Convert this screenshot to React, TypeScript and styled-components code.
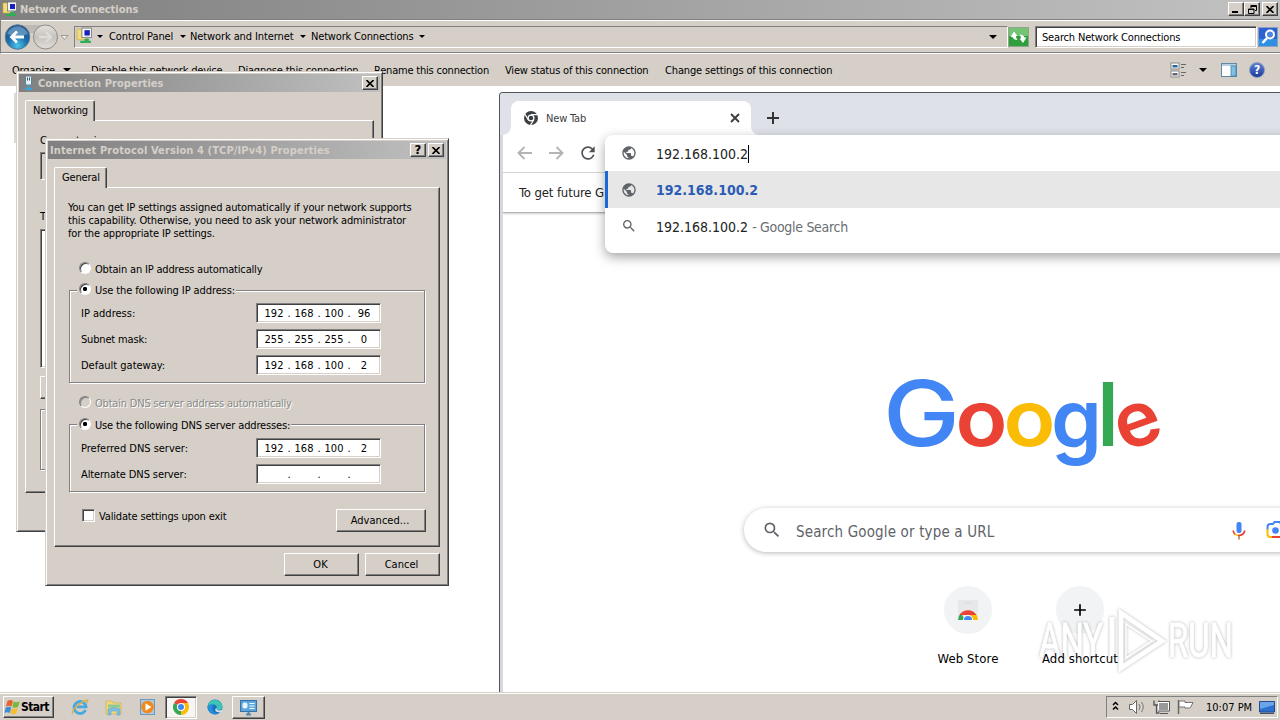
import React from "react";
import styled, { createGlobalStyle, css } from "styled-components";
import { MdAdd, MdPublic, MdRefresh, MdSearch } from "react-icons/md";

const face = "#d5cfc8";
const shade = "#808080";
const dark = "#404040";
const tahoma = `"DejaVu Sans Condensed", "DejaVu Sans", sans-serif`;

const Global = createGlobalStyle`
  * { box-sizing: border-box; }
  body { margin: 0; background: #fff; }
`;

const raised = css`
  border: 1px solid;
  border-color: #fff ${dark} ${dark} #fff;
  box-shadow: inset -1px -1px ${shade};
`;
const sunken = css`
  border: 1px solid;
  border-color: ${shade} #fff #fff ${shade};
  box-shadow: inset 1px 1px ${dark}, inset -1px -1px ${face};
`;

const Desktop = styled.div`
  position: relative;
  width: 1280px;
  height: 720px;
  overflow: hidden;
  display: flex;
  flex-direction: column;
  background: #fff;
  font: 11px/13px ${tahoma};
  letter-spacing: -0.17px;
  color: #000;
  white-space: nowrap;
`;

/* ---------- Explorer window ---------- */
const Explorer = styled.div`
  flex: 1;
  display: flex;
  flex-direction: column;
`;
const ExplorerTitle = styled.div`
  height: 19px;
  display: flex;
  align-items: center;
  padding: 0 2px 1px 2px;
  gap: 2px;
  background: linear-gradient(90deg, #808080, #c2c2c2);
  color: ${face};
  font-weight: bold;
  letter-spacing: -0.05px;
`;
const Spacer = styled.div`
  flex: 1;
`;
const CaptionButton = styled.div<{ $gap?: number }>`
  ${raised}
  width: 16px;
  height: 14px;
  margin-left: ${(p) => p.$gap ?? 0}px;
  background: ${face};
  display: flex;
  align-items: center;
  justify-content: center;
  color: #000;
`;
const HelpMark = styled.span`
  font-size: 13px;
  line-height: 12px;
`;
const NavBar = styled.div`
  height: 35px;
  display: flex;
  align-items: center;
  background: ${face};
  border-top: 1px solid ${shade};
  border-bottom: 1px solid #fff;
  border-left: 1px solid ${shade};
  box-shadow: inset 0 1px #fff, inset 0 -1px ${shade};
  padding: 0 2px 0 3px;
`;
const AddressBox = styled.div`
  width: 934px;
  height: 22px;
  margin-left: 4px;
  border: 1px solid;
  border-color: ${shade} #fff #fff ${shade};
  display: flex;
  align-items: center;
  padding-left: 1px;
`;
const AddressIcon = styled.span`
  width: 21px;
  height: 19px;
`;
const Crumb = styled.span<{ $w: number; $ls?: number }>`
  width: ${(p) => p.$w}px;
  letter-spacing: ${(p) => p.$ls ?? -0.17}px;
`;
const Caret = styled.span<{ $w: number; $size?: number }>`
  width: ${(p) => p.$w}px;
  display: flex;
  align-items: center;
  &::before {
    content: "";
    border: ${(p) => p.$size ?? 3}px solid transparent;
    border-top-color: #000;
    border-bottom: 0;
  }
`;
const SearchField = styled.div`
  ${sunken}
  width: 222px;
  height: 22px;
  margin: 0 1px 0 6px;
  background: #fff;
  padding: 4px 6px;
`;
const CommandBar = styled.div`
  height: 32px;
  background: ${face};
  display: flex;
  align-items: center;
  padding-left: 12px;
`;
const CommandGap = styled.span<{ $w: number }>`
  width: ${(p) => p.$w}px;
`;
const Files = styled.div`
  flex: 1;
  padding: 7px 0 0 14px;
`;
const SelectedItem = styled.div`
  width: 200px;
  height: 50px;
  background: #dedad3;
`;

/* ---------- Dialogs ---------- */
const Dialog = styled.div<{ $x: number; $y: number; $w: number; $h: number }>`
  position: absolute;
  left: ${(p) => p.$x}px;
  top: ${(p) => p.$y}px;
  width: ${(p) => p.$w}px;
  height: ${(p) => p.$h}px;
  background: ${face};
  border: 1px solid;
  border-color: ${face} ${dark} ${dark} ${face};
  box-shadow: inset 1px 1px #fff, inset -1px -1px ${shade};
  padding: 2px;
`;
const DialogTitle = styled.div<{ $ls?: number }>`
  height: 18px;
  display: flex;
  align-items: center;
  padding: 0 2px;
  background: linear-gradient(90deg, #808080, #c0c0c0);
  color: ${face};
  font-weight: bold;
  letter-spacing: ${(p) => p.$ls ?? 0}px;
`;
const TitleGap = styled.span`
  width: 3px;
`;
const Tab = styled.div<{ $w: number }>`
  position: relative;
  z-index: 1;
  width: ${(p) => p.$w}px;
  height: 21px;
  margin: 8px 0 -1px 6px;
  padding: 3px 0 0 7px;
  background: ${face};
  border: solid;
  border-width: 1px 1px 0 1px;
  border-color: #fff ${dark} #fff #fff;
  border-radius: 2px 2px 0 0;
  box-shadow: inset -1px 0 ${shade};
`;
const Panel = styled.div<{ $w: number; $h: number; $pad: string }>`
  ${raised}
  width: ${(p) => p.$w}px;
  height: ${(p) => p.$h}px;
  margin-left: 6px;
  padding: ${(p) => p.$pad};
`;
const Paragraph = styled.p`
  margin: 0 0 22px;
  letter-spacing: -0.15px;
`;
const Choice = styled.div<{ $left?: number; $disabled?: boolean }>`
  display: flex;
  align-items: center;
  gap: 4px;
  height: 13px;
  margin-left: ${(p) => p.$left ?? 0}px;
  ${(p) => p.$disabled && css`color: #8a8a86; text-shadow: 1px 1px #fff;`}
`;
const ChoiceText = styled.span<{ $ls?: number }>`
  padding-top: 1px;
  letter-spacing: ${(p) => p.$ls ?? -0.17}px;
`;
const RadioDot = styled.span<{ $on?: boolean; $disabled?: boolean }>`
  width: 12px;
  height: 12px;
  margin-bottom: 1px;
  border-radius: 50%;
  border: 1px solid;
  border-color: ${shade} #fff #fff ${shade};
  box-shadow: inset 1px 1px ${(p) => (p.$disabled ? shade : dark)};
  background: ${(p) => (p.$on ? "radial-gradient(circle, #000 1.9px, #fff 2.4px)" : p.$disabled ? face : "#fff")};
`;
const CheckSquare = styled.span`
  ${sunken}
  width: 13px;
  height: 13px;
  background: #fff;
`;
const Group = styled.div<{ $h: number; $mt: number }>`
  width: 356px;
  height: ${(p) => p.$h}px;
  margin: ${(p) => p.$mt}px 0 0 1px;
  border: 1px solid ${shade};
  box-shadow: 1px 1px #fff, inset 1px 1px #fff;
  padding: 0 0 0 8px;
`;
const Legend = styled.div<{ $rise: number }>`
  width: max-content;
  margin: -${(p) => p.$rise}px 0 7px -1px;
  padding: 0 1px 0 2px;
  background: ${face};
`;
const Field = styled.div`
  display: flex;
  align-items: center;
  height: 20px;
  margin-bottom: 6px;
  padding-left: 3px;
`;
const FieldLabel = styled.span<{ $ls?: number }>`
  width: 175px;
  letter-spacing: ${(p) => p.$ls ?? -0.1}px;
`;
const IpBox = styled.div`
  ${sunken}
  width: 125px;
  height: 20px;
  padding-left: 3px;
  display: flex;
  align-items: center;
  background: #fff;
  letter-spacing: 0;
`;
const Octet = styled.span`
  flex: none;
  width: 28px;
  text-align: center;
`;
const Dot = styled.span`
  flex: none;
  width: 2px;
  display: flex;
  justify-content: center;
`;
const Button = styled.div<{ $w: number }>`
  ${raised}
  width: ${(p) => p.$w}px;
  height: 23px;
  padding-right: 2px;
  display: flex;
  align-items: center;
  justify-content: center;
  background: ${face};
  letter-spacing: 0.03px;
`;
const Footer = styled.div`
  display: flex;
  justify-content: flex-end;
  gap: 6px;
  padding: 6px 6px 0 0;
`;
const ValidateRow = styled.div`
  display: flex;
  justify-content: space-between;
  width: 358px;
  margin-top: 17px;
`;
const SunkenBox = styled.div<{ $h: number; $mt: number; $white?: boolean }>`
  ${sunken}
  height: ${(p) => p.$h}px;
  margin-top: ${(p) => p.$mt}px;
  background: ${(p) => (p.$white ? "#fff" : face)};
`;
const ItemsLabel = styled.div`
  margin-top: 30px;
`;
const InstallButton = styled.div`
  ${raised}
  width: 90px;
  height: 23px;
  margin: 8px 0 10px;
`;
const Description = styled.div`
  height: 61px;
  border: 1px solid ${shade};
  box-shadow: 1px 1px #fff, inset 1px 1px #fff;
`;
const DisabledGap = styled.div`
  height: 13px;
`;

/* ---------- Browser ---------- */
const Browser = styled.div`
  position: absolute;
  left: 499px;
  top: 92px;
  width: 800px;
  height: 600px;
  display: flex;
  flex-direction: column;
  background: #fff;
  border: solid #50555a;
  border-width: 1px 0 0 1px;
  border-top-left-radius: 4px;
  box-shadow: inset 3px 0 #d5d9df;
  padding-left: 3px;
`;
const TabStrip = styled.div`
  height: 42px;
  margin-left: -3px;
  padding: 8px 0 0 11px;
  display: flex;
  background: #dee1e8;
  border-top-left-radius: 3px;
`;
const BrowserTab = styled.div`
  width: 240px;
  height: 34px;
  border-radius: 8px 8px 0 0;
  background: #fff;
  display: flex;
  align-items: center;
  padding: 0 11px 0 13px;
  color: #3c4043;
  position: relative;
  &::before, &::after {
    content: "";
    position: absolute;
    bottom: 0;
    width: 8px;
    height: 8px;
  }
  &::before { left: -8px; background: radial-gradient(circle at 0 0, transparent 7.5px, #fff 8px); }
  &::after { right: -8px; background: radial-gradient(circle at 100% 0, transparent 7.5px, #fff 8px); }
`;
const TabLabel = styled.span`
  flex: 1;
  margin-left: 8px;
`;
const NewTabButton = styled.div`
  margin: 11px 0 0 16px;
`;
const BrowserToolbar = styled.div`
  height: 38px;
  padding: 0 0 1px 14px;
  display: flex;
  align-items: center;
  gap: 17px;
  border-bottom: 1px solid #d4d4d4;
`;
const Reload = styled.span`
  display: flex;
  margin-left: -3px;
  color: #4e5256;
`;
const InfoBar = styled.div`
  height: 40px;
  padding: 13px 0 0 16px;
  font-size: 13px;
  letter-spacing: -0.12px;
  color: #222;
  border-bottom: 1px solid #b4b4b4;
  box-shadow: 0 1px 2px #ccc;
`;
const Omnibox = styled.div`
  position: absolute;
  left: 105px;
  top: 42px;
  width: 720px;
  height: 118px;
  background: #fff;
  border-radius: 8px;
  box-shadow: 0 4px 12px rgba(0, 0, 0, 0.36);
  font-size: 14px;
  line-height: 18px;
  letter-spacing: 0;
`;
const OmniRow = styled.div<{ $selected?: boolean }>`
  height: ${(p) => (p.$selected ? 37 : 36)}px;
  padding-left: ${(p) => (p.$selected ? 13 : 16)}px;
  display: flex;
  align-items: center;
  background: ${(p) => (p.$selected ? "#e7e7e7" : "transparent")};
  border-left: ${(p) => (p.$selected ? "3px solid #1a67d8" : "0")};
  color: #5f6368;
`;
const OmniText = styled.span<{ $link?: boolean; $cursor?: boolean }>`
  margin: ${(p) => (p.$link ? "0" : "2px")} 0 0 19px;
  color: ${(p) => (p.$link ? "#2b5cb5" : "#222")};
  font-weight: ${(p) => (p.$link ? "bold" : "normal")};
  border-right: ${(p) => (p.$cursor ? "1px solid #000" : "0")};
`;
const OmniHint = styled.span`
  margin: 2px 0 0 4px;
  color: #6a6e72;
  letter-spacing: -0.3px;
`;
const Page = styled.div`
  flex: 1;
  display: flex;
  flex-direction: column;
  padding-left: 240px;
`;
const LogoSvg = styled.svg`
  width: 280px;
  height: 100px;
  margin: 157px 0 0 140px;
  overflow: visible;
  font-family: Inter, sans-serif;
  letter-spacing: 0;
`;
const PageSearch = styled.div`
  width: 560px;
  height: 44px;
  margin: 38px 0 0 1px;
  border-radius: 22px;
  background: #fff;
  box-shadow: 0 1px 5px rgba(32, 33, 36, 0.32);
  display: flex;
  align-items: center;
  padding-left: 18px;
  color: #5f6368;
  font-size: 15px;
  line-height: 20px;
`;
const SearchPrompt = styled.span`
  width: 436px;
  margin-left: 14px;
  letter-spacing: 0.15px;
  padding-top: 3px;
`;
const LensGap = styled.span`
  width: 20px;
`;
const Shortcuts = styled.div`
  display: flex;
  margin: 34px 0 0 169px;
`;
const Shortcut = styled.div`
  width: 112px;
  display: flex;
  flex-direction: column;
  align-items: center;
  gap: 16px;
  font-size: 13px;
  line-height: 18px;
  letter-spacing: 0.1px;
`;
const ShortcutLabel = styled.span`
  position: relative;
  z-index: 1;
`;
const Bubble = styled.div`
  width: 48px;
  height: 48px;
  border-radius: 50%;
  background: #f1f3f4;
  display: flex;
  align-items: center;
  justify-content: center;
`;
const Watermark = styled.svg`
  position: absolute;
  left: 1030px;
  top: 600px;
  width: 215px;
  height: 80px;
  overflow: visible;
  filter: drop-shadow(0 0 1.5px rgba(90, 90, 90, 0.45));
  font-family: "Liberation Sans Narrow", "Roboto", sans-serif;
  letter-spacing: 0;
`;

/* ---------- Taskbar ---------- */
const Taskbar = styled.div`
  position: relative;
  height: 28px;
  display: flex;
  align-items: center;
  padding: 1px 2px 0 3px;
  background: ${face};
  border-top: 1px solid ${face};
  box-shadow: inset 0 1px #fff;
`;
const StartButton = styled.div`
  ${raised}
  width: 51px;
  height: 22px;
  display: flex;
  align-items: center;
  font-weight: bold;
  font-size: 12px;
  letter-spacing: -0.6px;
`;
const TaskButton = styled.div<{ $state?: "active" | "open"; $ml?: number; $w?: number }>`
  width: ${(p) => p.$w ?? 34}px;
  height: 23px;
  margin-left: ${(p) => p.$ml ?? 0}px;
  display: flex;
  align-items: center;
  justify-content: center;
  ${(p) => p.$state === "active" && css`${sunken} background: #f6f5f3;`}
  ${(p) => p.$state === "open" && raised}
`;
const Tray = styled.div`
  width: 172px;
  height: 22px;
  border: 1px solid;
  border-color: ${shade} #fff #fff ${shade};
  display: flex;
  align-items: center;
  padding-left: 5px;
`;
const Clock = styled.span`
  width: 53px;
  margin-left: 10px;
  letter-spacing: 0;
`;

/* ---------- Icons ---------- */
const NetIcon = ({ size = 16 }: { size?: number }) => (
  <svg width={size} height={size} viewBox="0 0 16 16">
    <path d="M1 2h4l1 1h4v9H1z" fill="#f2dc7c" stroke="#c9a83c" strokeWidth=".6" />
    <rect x="5.500" y="1" width="9" height="9" fill="#f4f4f0" stroke="#777" strokeWidth=".8" />
    <rect x="8" y="3" width="5" height="5" fill="#1620c0" />
    <path d="M9 9h3v3H9z" fill="#9aa" />
    <path d="M4 13h10v2H4zM8 11h4v3H8z" fill="#2fae55" />
  </svg>
);
const CloseGlyph = () => (
  <svg width="8" height="7" viewBox="0 0 8 7">
    <path d="M.5 0L7.5 7M7.5 0L.5 7" stroke="#000" strokeWidth="1.6" />
  </svg>
);
const Arrows = () => (
  <svg width="66" height="28" viewBox="0 0 66 28">
    <defs>
      <radialGradient id="back" cx=".5" cy=".85" r=".8">
        <stop offset="0" stopColor="#49c6ee" />
        <stop offset=".5" stopColor="#1d6ea8" />
        <stop offset="1" stopColor="#1c4f86" />
      </radialGradient>
      <linearGradient id="fwd" x2="0" y2="1">
        <stop offset="0" stopColor="#e4e2de" />
        <stop offset=".5" stopColor="#c6c3be" />
        <stop offset="1" stopColor="#e2dfda" />
      </linearGradient>
    </defs>
    <path d="M10 2h36v8H10z" fill="#bdb9b3" />
    <circle cx="13.5" cy="14" r="12.3" fill="url(#back)" stroke="#5b7d9c" />
    <path d="M3 11a11 11 0 0 1 21 0q-10 4-21 0z" fill="#8fb9da" opacity=".55" />
    <path d="M20 14H8M13 8.5L7.5 14l5.5 5.5" fill="none" stroke="#fff" strokeWidth="2.8" />
    <circle cx="41.5" cy="14" r="12" fill="url(#fwd)" stroke="#8f8c88" />
    <path d="M35 14h11M42 9l5 5-5 5" fill="none" stroke="#dedbd6" strokeWidth="2.4" />
    <path d="M57 12.5h7l-3.500 4z" fill="#eee" stroke="#8a8782" strokeWidth=".8" />
  </svg>
);
const RefreshIcon = () => (
  <svg width="21" height="20" viewBox="0 0 21 20">
    <rect x=".5" y=".5" width="20" height="19" fill="#2f9f3c" stroke="#8fa68c" />
    <rect x="1" y="1" width="19" height="8" fill="#74c474" />
    <path d="M2.500 10L6 4.500 9.500 9H8q0 2.500 1.500 4Q5.500 13 4.500 10z" fill="#fff" />
    <path d="M18.500 10.500L15 16l-3.500-4.500H13q0-2.500-1.500-4 4 0 5 3z" fill="#fff" />
  </svg>
);
const SearchIcon = () => (
  <svg width="20" height="20" viewBox="0 0 20 20">
    <rect x=".5" y=".5" width="19" height="19" fill="#2c62cf" stroke="#8e9dc4" />
    <path d="M1 12h18v7H1z" fill="#2f8fe0" />
    <circle cx="12" cy="7.500" r="4" fill="#4c86e2" stroke="#fff" strokeWidth="2" />
    <path d="M9 11l-4.500 5" stroke="#fff" strokeWidth="2.600" />
  </svg>
);
const ViewIcon = () => (
  <svg width="17" height="17" viewBox="0 0 17 17">
    <rect x="1" y="1" width="8" height="6" fill="#fff" stroke="#888" />
    <rect x="2.500" y="3" width="5" height="2.500" fill="#27689c" />
    <rect x="1" y="9" width="8" height="6" fill="#fff" stroke="#888" />
    <rect x="2.500" y="11" width="5" height="2.500" fill="#667" />
    <path d="M11 2.500h5M11 5.500h3M11 10.500h5M11 13.500h3" stroke="#666" />
  </svg>
);
const PaneIcon = () => (
  <svg width="17" height="15" viewBox="0 0 17 15">
    <rect x=".5" y=".5" width="15" height="13" fill="#fff" stroke="#6088a8" />
    <path d="M1 2h14" stroke="#6aa0c8" />
    <rect x="10" y="3" width="5" height="10" fill="#7fc0e4" stroke="#3f82ac" strokeWidth=".8" />
  </svg>
);
const HelpBadge = styled.span`
  width: 16px;
  height: 16px;
  border-radius: 50%;
  border: 1px solid #8c98b8;
  background: linear-gradient(#5f82d4, #1b3a9e);
  color: #fff;
  font-weight: bold;
  font-size: 12px;
  line-height: 14px;
  text-align: center;
`;
const AdapterIcon = () => (
  <svg width="14" height="16" viewBox="0 0 14 16">
    <rect x="4.500" y="1" width="6" height="9" rx="1" fill="#e8f3fa" stroke="#5d7f98" />
    <path d="M6.500 2.500v3M8.500 2.500v3" stroke="#355" />
    <path d="M7.500 10v3M4 14h7" stroke="#3aa3d8" strokeWidth="2" />
  </svg>
);
const ChromeGray = () => (
  <svg width="14" height="14" viewBox="0 0 14 14">
    <circle cx="7" cy="7" r="7" fill="#3c4043" />
    <circle cx="7" cy="7" r="2.900" fill="#3c4043" stroke="#fff" strokeWidth="1.300" />
    <path d="M7 3.700h6.500M4.200 8.700L1 3.300M9.800 8.700L6.500 14" stroke="#fff" strokeWidth="1.200" />
  </svg>
);
const TabClose = () => (
  <svg width="10" height="10" viewBox="0 0 10 10">
    <path d="M1 1l8 8M9 1L1 9" stroke="#3c4043" strokeWidth="1.900" />
  </svg>
);
const PlusIcon = () => (
  <svg width="12" height="12" viewBox="0 0 12 12">
    <path d="M6 0v12M0 6h12" stroke="#333" strokeWidth="2" />
  </svg>
);
const PageArrow = ({ forward }: { forward?: boolean }) => (
  <svg width="15" height="14" viewBox="0 0 15 14">
    <path
      d={forward ? "M0 7h13M7.500 1l6 6-6 6" : "M15 7H2M7.500 1l-6 6 6 6"}
      fill="none"
      stroke="#b4b4b4"
      strokeWidth="1.900"
    />
  </svg>
);
const ChromeColor = ({ size = 16 }: { size?: number }) => (
  <svg width={size} height={size} viewBox="0 0 16 16">
    <path d="M8 8L1.070 4A8 8 0 0 1 14.930 4z" fill="#ea4335" />
    <path d="M8 8L14.930 4A8 8 0 0 1 8 16z" fill="#fbbc05" />
    <path d="M8 8L8 16A8 8 0 0 1 1.070 4z" fill="#34a853" />
    <path d="M8 4h6.900L11.500 10z" fill="#fbbc05" />
    <path d="M8 4H14.930L8 0z" fill="#ea4335" />
    <circle cx="8" cy="8" r="4" fill="#fff" />
    <circle cx="8" cy="8" r="3" fill="#4285f4" />
  </svg>
);
const MicIcon = () => (
  <svg width="14" height="19" viewBox="0 0 14 19">
    <rect x="4.500" y="1" width="5" height="11" rx="2" fill="#4285f4" />
    <path d="M1.200 9.500a6 6 0 0 0 2 4" fill="none" stroke="#ea4335" strokeWidth="1.700" />
    <path d="M2.800 13q1.500 1.500 4.200 1.500" fill="none" stroke="#fbbc04" strokeWidth="1.700" />
    <path d="M6 14.500q6 0 6.800-5" fill="none" stroke="#ea4335" strokeWidth="1.700" />
    <path d="M7 15v3.500" stroke="#c2703a" strokeWidth="1.500" />
  </svg>
);
const LensIcon = () => (
  <svg width="22" height="20" viewBox="0 0 22 20">
    <path d="M1.500 10V7a3 3 0 0 1 3-3H7l1.500-2h5L15 4h2.500a3 3 0 0 1 3 3v2" fill="none" stroke="#4285f4" strokeWidth="2" />
    <path d="M1.500 9v5a3 3 0 0 0 3 3H6" fill="none" stroke="#fbbc04" strokeWidth="2" />
    <path d="M6 17h8" stroke="#ea4335" strokeWidth="2" />
    <circle cx="9.500" cy="10.500" r="3.300" fill="#4285f4" />
  </svg>
);
const StoreIcon = () => (
  <svg width="24" height="24" viewBox="0 0 24 24">
    <path d="M2 2h20v19H2z" fill="#e6e8ea" />
    <path d="M8 4h8v2H8z" fill="#dfe1e3" />
    <path d="M2 22a10 10 0 0 1 3-7l4 7z" fill="#34a853" />
    <path d="M3.500 17A10 10 0 0 1 20.500 17z" fill="#ea4335" />
    <path d="M14 17h6.500A10 10 0 0 1 22 22h-7z" fill="#fbbc05" />
    <path d="M7 22a5 5 0 0 1 10 0z" fill="#fff" />
    <path d="M8 22a4 4 0 0 1 8 0z" fill="#4285f4" />
  </svg>
);
const FlagLogo = () => (
  <svg width="17" height="16" viewBox="0 0 17 16">
    <path d="M3.500 2q3-1.800 5.500 0L7.500 7.500q-2.500-1.500-5.500 0z" fill="#e8612c" />
    <path d="M9.800 2.500q3 1.500 6-.2l-1.600 5.500q-3 1.700-5.900.2z" fill="#7ab53c" />
    <path d="M1.800 8.500q3-1.700 5.500 0L5.800 14q-2.500-1.500-5.500 0z" fill="#3d8ed8" />
    <path d="M8 9q3 1.500 6-.2l-1.600 5.500q-3 1.700-5.900.2z" fill="#f6bd2c" />
  </svg>
);
const IeIcon = () => (
  <svg width="18" height="18" viewBox="0 0 18 18">
    <path d="M14.500 12A6 6 0 1 1 15 8.800H5.500" fill="none" stroke="#48a8e0" strokeWidth="2.800" />
    <path d="M1.500 16q-1-3.500 5-8.500t10-5.500q1 1-1 3" fill="none" stroke="#d9b048" strokeWidth="1.300" />
  </svg>
);
const FolderIcon = () => (
  <svg width="18" height="17" viewBox="0 0 18 17">
    <path d="M1 2h6l1 2h8v11H1z" fill="#f0d77c" stroke="#d0b050" strokeWidth=".7" />
    <path d="M3 5.500h12v3H3z" fill="#8fca94" />
    <path d="M3 16v-6q6-3 12 0v6h-3v-4H6v4z" fill="#7cc0e6" stroke="#5a9cc4" strokeWidth=".5" />
  </svg>
);
const MediaIcon = () => (
  <svg width="16" height="16" viewBox="0 0 16 16">
    <rect x=".5" y=".5" width="14" height="15" fill="#a9cbe6" stroke="#6f98bc" />
    <circle cx="7.500" cy="8" r="6.300" fill="#f08a1c" />
    <path d="M5.500 4.300v7.400L11.500 8z" fill="#fff" />
  </svg>
);
const EdgeIcon = () => (
  <svg width="16" height="16" viewBox="0 0 16 16">
    <circle cx="8" cy="8" r="7.500" fill="#1b6fc0" />
    <path d="M.6 7A7.500 7.500 0 0 1 15.500 8q0 3-3.500 3-2.500 0-2-2Q10 6 7 5.500 3 5 .6 7z" fill="#3cc4b4" />
    <path d="M.6 7Q3 4.500 7 5.500 4 8 6 11.500 8 15 12 14A7.500 7.500 0 0 1 .6 7z" fill="#2490dc" />
    <path d="M9.500 8.500q-.5 2 1.500 2.700 2 .5 4-.3l.5 1.600-1.500.8q-4 .5-5.500-1.300-1-2 1-3.500z" fill="#d5e4ea" />
  </svg>
);
const PanelIcon = () => (
  <svg width="17" height="17" viewBox="0 0 17 17">
    <rect x=".5" y="1.500" width="16" height="11" fill="#5aa6dc" stroke="#3572a8" />
    <rect x="2.500" y="3.500" width="5" height="6" rx="2" fill="#e8f3fc" />
    <path d="M9.500 4.500h5M9.500 7h5M9.500 9.500h5" stroke="#fff" />
    <path d="M6 15.500h5M8.500 13v2" stroke="#4c88b8" strokeWidth="2" />
  </svg>
);
const TrayIcons = () => (
  <svg width="84" height="18" viewBox="0 0 84 18">
    <path d="M1 7L3.500 4.500 6 7M1 11.500L3.500 9 6 11.500" fill="none" stroke="#000" strokeWidth="1.500" />
    <path d="M17.500 6.500h3l4-4v13l-4-4h-3z" fill="#fff" stroke="#666" />
    <path d="M27 6q2 3 0 6M29.500 4q3.500 5 0 10" fill="none" stroke="#777" />
    <path d="M42 2.500v4.500h5v-4.500M44.500 7v8h3" fill="none" stroke="#555" strokeWidth="1.300" />
    <rect x="46.500" y="4.500" width="10" height="8" fill="#999" stroke="#fff" />
    <path d="M46 3.500h11.500v9.500H46M48 15.500h8" fill="none" stroke="#555" />
    <path d="M66.500 2v14" stroke="#666" strokeWidth="1.500" />
    <path d="M67 3h6v1.500h8l-2.500 5-1 .5H73V9h-6z" fill="#fff" stroke="#666" strokeWidth=".9" />
  </svg>
);
const DesktopIcon = () => (
  <svg width="16" height="13" viewBox="0 0 16 13">
    <path d="M.5.5h15v10.500H.5z" fill="#2c6fd0" stroke="#224a8c" />
    <path d="M1 1h14v3L1 8z" fill="#6ca4ea" />
    <path d="M1 12.300h14" stroke="#203048" />
  </svg>
);

const Address = ({ parts }: { parts: string[] }) => (
  <IpBox>
    {parts.map((part, i) => (
      <React.Fragment key={i}>
        {i > 0 && <Dot>.</Dot>}
        <Octet>{part}</Octet>
      </React.Fragment>
    ))}
  </IpBox>
);

const commands = [
  { label: "Disable this network device", width: 147, ls: -0.2 },
  { label: "Diagnose this connection", width: 136, ls: -0.2 },
  { label: "Rename this connection", width: 131, ls: -0.2 },
  { label: "View status of this connection", width: 160, ls: -0.17 },
  { label: "Change settings of this connection", width: 505, ls: -0.14 },
];

export default function App() {
  return (
    <Desktop>
      <Global />
      <Explorer>
        <ExplorerTitle>
          <NetIcon />
          Network Connections
          <Spacer />
          <CaptionButton>
            <svg width="8" height="8"><path d="M0 7h6" stroke="#000" strokeWidth="2" /></svg>
          </CaptionButton>
          <CaptionButton $gap={-2}>
            <svg width="9" height="9">
              <path d="M3 .5h5.500v5H7M3 1.500h5.500M3 0v3M.5 4h5.500v4.500H.5zM0 4.500h6" fill="none" stroke="#000" />
            </svg>
          </CaptionButton>
          <CaptionButton><CloseGlyph /></CaptionButton>
        </ExplorerTitle>
        <NavBar>
          <Arrows />
          <AddressBox>
            <AddressIcon><NetIcon size={17} /></AddressIcon>
            <Caret $w={12} />
            <Crumb $w={71} $ls={-0.1}>Control Panel</Crumb>
            <Caret $w={10} />
            <Crumb $w={110} $ls={-0.1}>Network and Internet</Crumb>
            <Caret $w={11} />
            <Crumb $w={108}>Network Connections</Crumb>
            <Caret $w={570} />
            <Caret $w={10} $size={4} />
          </AddressBox>
          <RefreshIcon />
          <SearchField>Search Network Connections</SearchField>
          <SearchIcon />
        </NavBar>
        <CommandBar>
          <Crumb $w={51}>Organize</Crumb>
          <Caret $w={28} $size={4} />
          {commands.map((c) => (
            <Crumb key={c.label} $w={c.width} $ls={c.ls}>{c.label}</Crumb>
          ))}
          <ViewIcon />
          <Spacer />
          <Caret $w={22} $size={4} />
          <PaneIcon />
          <CommandGap $w={11} />
          <HelpBadge>?</HelpBadge>
          <CommandGap $w={15} />
        </CommandBar>
        <Files>
          <SelectedItem />
        </Files>
      </Explorer>

      <Browser>
        <TabStrip>
          <BrowserTab>
            <ChromeGray />
            <TabLabel>New Tab</TabLabel>
            <TabClose />
          </BrowserTab>
          <NewTabButton><PlusIcon /></NewTabButton>
        </TabStrip>
        <BrowserToolbar>
          <PageArrow />
          <PageArrow forward />
          <Reload><MdRefresh size={20} /></Reload>
        </BrowserToolbar>
        <InfoBar>To get future G</InfoBar>
        <Page>
          <LogoSvg viewBox="883 370 280 100" fontWeight="600">
            <text x="883" y="446" fontSize="91" fill="#4285f4" textLength="77" lengthAdjust="spacingAndGlyphs" fontWeight="500">G</text>
            <text x="955.500" y="446" fontSize="78" fill="#ea4335" textLength="52" lengthAdjust="spacingAndGlyphs">o</text>
            <text x="1003.500" y="446" fontSize="78" fill="#fbbc05" textLength="52" lengthAdjust="spacingAndGlyphs">o</text>
            <text x="1051" y="447.500" fontSize="82" fill="#4285f4" textLength="51" lengthAdjust="spacingAndGlyphs">g</text>
            <text x="1097.500" y="446" fontSize="88" fill="#34a853" textLength="21" lengthAdjust="spacingAndGlyphs">l</text>
            <text x="1115" y="445.500" fontSize="76" fill="#ea4335" textLength="46" lengthAdjust="spacingAndGlyphs" transform="rotate(-20 1138 425)">e</text>
          </LogoSvg>
          <PageSearch>
            <MdSearch size={20} />
            <SearchPrompt>Search Google or type a URL</SearchPrompt>
            <MicIcon />
            <LensGap />
            <LensIcon />
          </PageSearch>
          <Shortcuts>
            <Shortcut>
              <Bubble><StoreIcon /></Bubble>
              <ShortcutLabel>Web Store</ShortcutLabel>
            </Shortcut>
            <Shortcut>
              <Bubble><MdAdd size={20} /></Bubble>
              <ShortcutLabel>Add shortcut</ShortcutLabel>
            </Shortcut>
          </Shortcuts>
        </Page>
        <Omnibox>
          <OmniRow>
            <MdPublic size={16} />
            <OmniText $cursor>192.168.100.2</OmniText>
          </OmniRow>
          <OmniRow $selected>
            <MdPublic size={16} />
            <OmniText $link>192.168.100.2</OmniText>
          </OmniRow>
          <OmniRow>
            <MdSearch size={16} />
            <OmniText>192.168.100.2</OmniText>
            <OmniHint>- Google Search</OmniHint>
          </OmniRow>
        </Omnibox>
      </Browser>

      <Watermark viewBox="1030 600 215 80" fill="#fff" stroke="#fff" strokeWidth="1">
        <text x="1039" y="657" fontSize="48" textLength="64" lengthAdjust="spacingAndGlyphs">ANY</text>
        <path d="M1112 617v40M1121 613l41 28-41 27z" fill="none" strokeWidth="5" />
        <path d="M1126 624v34l26-17z" fill="none" strokeWidth="1.500" />
        <text x="1168" y="657" fontSize="48" textLength="65" lengthAdjust="spacingAndGlyphs">RUN</text>
      </Watermark>

      <Dialog $x={16} $y={71} $w={367} $h={461}>
        <DialogTitle $ls={0.05}>
          <AdapterIcon />
          <TitleGap />
          Connection Properties
          <Spacer />
          <CaptionButton><CloseGlyph /></CaptionButton>
        </DialogTitle>
        <Tab $w={70}>Networking</Tab>
        <Panel $w={349} $h={373} $pad="13px 14px">
          Connect using:
          <SunkenBox $h={28} $mt={5} />
          <ItemsLabel>This</ItemsLabel>
          <SunkenBox $h={139} $mt={6} $white />
          <InstallButton />
          <Description />
        </Panel>
      </Dialog>

      <Dialog $x={45} $y={138} $w={404} $h={448}>
        <DialogTitle $ls={0.11}>
          Internet Protocol Version 4 (TCP/IPv4) Properties
          <Spacer />
          <CaptionButton><HelpMark>?</HelpMark></CaptionButton>
          <CaptionButton $gap={2}><CloseGlyph /></CaptionButton>
        </DialogTitle>
        <Tab $w={53}>General</Tab>
        <Panel $w={386} $h={360} $pad="13px 0 0 13px">
          <Paragraph>
            You can get IP settings assigned automatically if your network supports<br />
            this capability. Otherwise, you need to ask your network administrator<br />
            for the appropriate IP settings.
          </Paragraph>
          <Choice $left={11}>
            <RadioDot />
            <ChoiceText>Obtain an IP address automatically</ChoiceText>
          </Choice>
          <Group $h={93} $mt={15}>
            <Legend $rise={8}>
              <Choice>
                <RadioDot $on />
                <ChoiceText $ls={-0.1}>Use the following IP address:</ChoiceText>
              </Choice>
            </Legend>
            <Field><FieldLabel $ls={0}>IP address:</FieldLabel><Address parts={["192", "168", "100", "96"]} /></Field>
            <Field><FieldLabel $ls={-0.17}>Subnet mask:</FieldLabel><Address parts={["255", "255", "255", "0"]} /></Field>
            <Field><FieldLabel $ls={0}>Default gateway:</FieldLabel><Address parts={["192", "168", "100", "2"]} /></Field>
          </Group>
          <DisabledGap />
          <Choice $left={11} $disabled>
            <RadioDot $disabled />
            <ChoiceText $ls={-0.2}>Obtain DNS server address automatically</ChoiceText>
          </Choice>
          <Group $h={68} $mt={15}>
            <Legend $rise={7}>
              <Choice>
                <RadioDot $on />
                <ChoiceText $ls={-0.15}>Use the following DNS server addresses:</ChoiceText>
              </Choice>
            </Legend>
            <Field><FieldLabel $ls={-0.02}>Preferred DNS server:</FieldLabel><Address parts={["192", "168", "100", "2"]} /></Field>
            <Field><FieldLabel>Alternate DNS server:</FieldLabel><Address parts={["", "", "", ""]} /></Field>
          </Group>
          <ValidateRow>
            <Choice $left={14}>
              <CheckSquare />
              <ChoiceText>Validate settings upon exit</ChoiceText>
            </Choice>
            <Button $w={90}>Advanced...</Button>
          </ValidateRow>
        </Panel>
        <Footer>
          <Button $w={75}>OK</Button>
          <Button $w={75}>Cancel</Button>
        </Footer>
      </Dialog>

      <Taskbar>
        <StartButton><FlagLogo />Start</StartButton>
        <TaskButton $ml={9}><IeIcon /></TaskButton>
        <TaskButton><FolderIcon /></TaskButton>
        <TaskButton><MediaIcon /></TaskButton>
        <TaskButton $state="active" $w={32}><ChromeColor /></TaskButton>
        <TaskButton $ml={1}><EdgeIcon /></TaskButton>
        <TaskButton $state="open" $w={33}><PanelIcon /></TaskButton>
        <Spacer />
        <Tray>
          <TrayIcons />
          <Clock>10:07 PM</Clock>
          <DesktopIcon />
        </Tray>
      </Taskbar>
    </Desktop>
  );
}
